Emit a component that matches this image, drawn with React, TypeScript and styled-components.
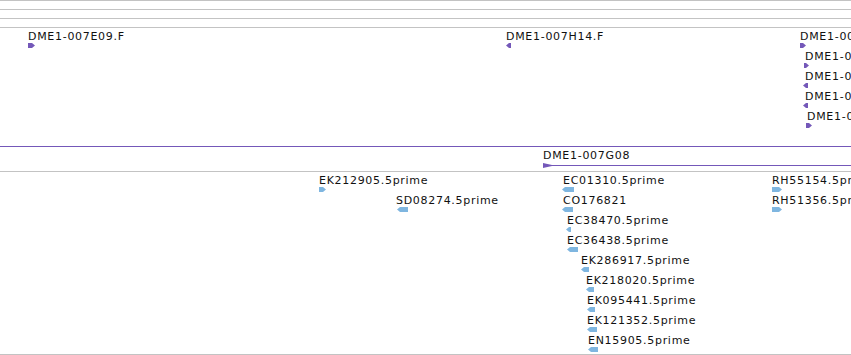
import styled, { createGlobalStyle } from "styled-components";

const GlobalStyle = createGlobalStyle`
  html, body {
    margin: 0;
    padding: 0;
    background: #ffffff;
  }
  body {
    font-family: "DejaVu Sans", "Liberation Sans", sans-serif;
  }
`;

const PURPLE = "#7458b9";
const BLUE = "#7fb6e0";
const GRID = "#c3c3c3";

type Dir = "left" | "right";

type Feature = {
  label: string;
  lx: number;
  gx: number;
  w: number;
  dir: Dir;
  row: number;
};

const cloneFeatures: Feature[] = [
  { label: "DME1-007E09.F", lx: 28, gx: 28, w: 7, dir: "right", row: 0 },
  { label: "DME1-007H14.F", lx: 506, gx: 506, w: 5, dir: "left", row: 0 },
  { label: "DME1-007G11.F", lx: 800, gx: 800, w: 6, dir: "right", row: 0 },
  { label: "DME1-007G02.F", lx: 805, gx: 804, w: 5, dir: "right", row: 1 },
  { label: "DME1-007G05.F", lx: 805, gx: 803, w: 5, dir: "left", row: 2 },
  { label: "DME1-007G17.F", lx: 805, gx: 803, w: 5, dir: "left", row: 3 },
  { label: "DME1-007G20.F", lx: 807, gx: 806, w: 6, dir: "right", row: 4 },
];

const estFeatures: Feature[] = [
  { label: "EK212905.5prime", lx: 319, gx: 319, w: 7, dir: "right", row: 0 },
  { label: "SD08274.5prime", lx: 396, gx: 397, w: 11, dir: "left", row: 1 },
  { label: "EC01310.5prime", lx: 563, gx: 562, w: 12, dir: "left", row: 0 },
  { label: "CO176821", lx: 563, gx: 562, w: 11, dir: "left", row: 1 },
  { label: "EC38470.5prime", lx: 567, gx: 566, w: 5, dir: "left", row: 2 },
  { label: "EC36438.5prime", lx: 567, gx: 567, w: 11, dir: "left", row: 3 },
  { label: "EK286917.5prime", lx: 581, gx: 581, w: 8, dir: "left", row: 4 },
  { label: "EK218020.5prime", lx: 586, gx: 586, w: 8, dir: "left", row: 5 },
  { label: "EK095441.5prime", lx: 587, gx: 587, w: 8, dir: "left", row: 6 },
  { label: "EK121352.5prime", lx: 587, gx: 587, w: 10, dir: "left", row: 7 },
  { label: "EN15905.5prime", lx: 588, gx: 588, w: 10, dir: "left", row: 8 },
  { label: "RH55154.5prime", lx: 772, gx: 772, w: 10, dir: "right", row: 0 },
  { label: "RH51356.5prime", lx: 772, gx: 772, w: 10, dir: "right", row: 1 },
];

const Page = styled.div`
  width: 851px;
  height: 355px;
  overflow: hidden;
  display: flex;
  flex-direction: column;
`;

const RulerBand = styled.div`
  height: 8px;
  border-top: 1px solid ${GRID};
`;

const Track = styled.div<{ $height: number; $line: string; $closed?: boolean }>`
  position: relative;
  height: ${({ $height }) => $height}px;
  border-top: 1px solid ${({ $line }) => $line};
  border-bottom: ${({ $closed }) => ($closed ? `1px solid ${GRID}` : "none")};
`;

const FeatureBox = styled.div`
  position: absolute;
  display: flex;
  flex-direction: column;
  align-items: flex-start;
`;

const Label = styled.span`
  font-size: 11px;
  line-height: 13px;
  letter-spacing: 0.7px;
  color: #111111;
  white-space: nowrap;
`;

const Glyph = styled.svg<{ $shift: number; $gap?: number }>`
  display: block;
  margin-left: ${({ $shift }) => $shift}px;
  margin-top: ${({ $gap }) => $gap ?? 0}px;
`;

function Arrow({ w, dir, color, shift }: { w: number; dir: Dir; color: string; shift: number }) {
  const h = 5;
  const tip = Math.min(3, w - 1);
  const points =
    dir === "right"
      ? `0,0 ${w - tip},0 ${w},${h / 2} ${w - tip},${h} 0,${h}`
      : `0,${h / 2} ${tip},0 ${w},0 ${w},${h} ${tip},${h}`;
  return (
    <Glyph $shift={shift} width={w} height={h} viewBox={`0 0 ${w} ${h}`}>
      <polygon points={points} fill={color} />
    </Glyph>
  );
}

function FeatureRows({ items, color, top }: { items: Feature[]; color: string; top: number }) {
  return (
    <>
      {items.map((f) => (
        <FeatureBox key={f.label} style={{ left: f.lx, top: top + f.row * 20 }}>
          <Label>{f.label}</Label>
          <Arrow w={f.w} dir={f.dir} color={color} shift={f.gx - f.lx} />
        </FeatureBox>
      ))}
    </>
  );
}

export default function App() {
  return (
    <>
      <GlobalStyle />
      <Page>
        <RulerBand />
        <RulerBand />
        <RulerBand />
        <Track $height={118} $line={GRID}>
          <FeatureRows items={cloneFeatures} color={PURPLE} top={2} />
        </Track>
        <Track $height={24} $line={PURPLE}>
          <FeatureBox style={{ left: 543, top: 2 }}>
            <Label>DME1-007G08</Label>
            <Glyph $shift={0} $gap={1} width={308} height={5} viewBox="0 0 308 5">
              <polygon points="0,0 9,2 9,3 0,5" fill={PURPLE} />
              <rect x={0} y={2} width={308} height={1} fill={PURPLE} />
            </Glyph>
          </FeatureBox>
        </Track>
        <Track $height={182} $line={GRID} $closed>
          <FeatureRows items={estFeatures} color={BLUE} top={2} />
        </Track>
      </Page>
    </>
  );
}
